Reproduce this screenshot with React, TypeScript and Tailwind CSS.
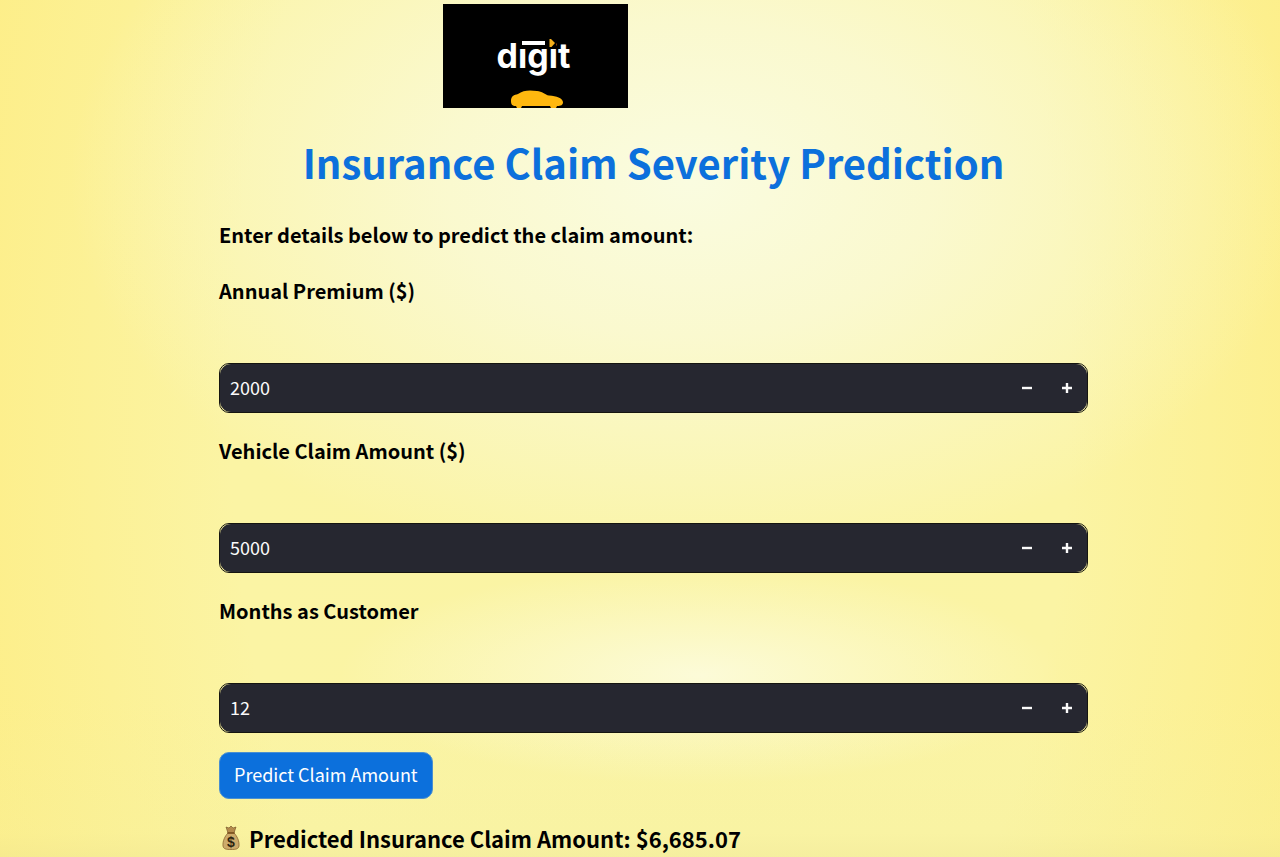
import { useId, useState } from "react";

function Logo() {
  return (
    <svg
      role="img"
      aria-label="digit"
      viewBox="0 0 185 104"
      className="ml-56 block h-[104px] w-[185px] bg-black"
    >
      <text
        x="90.5"
        y="64"
        textAnchor="middle"
        fill="#fff"
        fontSize="34"
        fontWeight="700"
        fontFamily="Inter, sans-serif"
      >
        digit
      </text>
      <rect x="74" y="33" width="11" height="12" fill="#000" />
      <rect x="102" y="33" width="11" height="12" fill="#000" />
      <rect x="79" y="37" width="23" height="4" fill="#fff" />
      <path d="M106.500 35 H108 L112 39 L108.500 43 H106.500 Z" fill="#f5b01d" />
      <path
        d="M68 97 C68 92 71 91 75 90 C80 86 87 86 94 87 C99 87 102 91 106 91.500 C114 92 119 94 120 98 C120 101 118 102 114 102 L113 104 L108 104 L107 102 L79 102 L78 104 L74 104 L73 102 C69 102 68 100 68 97 Z"
        fill="#ffb80f"
      />
    </svg>
  );
}

function MoneyBag() {
  return (
    <svg role="img" aria-label="Money bag" viewBox="0 0 24 26" className="h-[26px] w-6 shrink-0">
      <path d="M7 2 L10 3 L12 1 L14 3 L17 2 L15 8 H9 Z" fill="#b58b4c" stroke="#6d4c21" strokeWidth="0.6" />
      <path
        d="M9 8 H15 C18 11 20.500 16 20 21 C19.500 24 17 24.500 12 24.500 C7 24.500 4.500 24 4 21 C3.500 16 6 11 9 8 Z"
        fill="#cdab6b"
        stroke="#8a6530"
        strokeWidth="0.8"
      />
      <path d="M9 8 H15" stroke="#7a4f1c" strokeWidth="1.6" strokeLinecap="round" />
      <text
        x="12"
        y="21.500"
        textAnchor="middle"
        fontSize="14"
        fontWeight="700"
        fontFamily="Liberation Sans, sans-serif"
        fill="#2d2410"
      >
        $
      </text>
    </svg>
  );
}

type FieldProps = {
  label: string;
  value: number;
  onChange: (value: number) => void;
};

function NumberField({ label, value, onChange }: FieldProps) {
  const id = useId();
  return (
    <div className="flex flex-col gap-14">
      <label htmlFor={id} className="text-[20px] leading-8 font-bold text-black">
        {label}
      </label>
      <div className="h-[50px] rounded-[10px] border border-[#15150f]">
        <div className="flex h-full items-stretch rounded-[11px] bg-[#262730] text-[#fafafa]">
          <input
            id={id}
            type="text"
            inputMode="numeric"
            value={value}
            onChange={(e) => onChange(Number(e.target.value) || 0)}
            className="min-w-0 flex-1 bg-transparent px-[10px] pb-[2px] text-[18px] outline-none"
          />
          <button
            type="button"
            aria-label={`Decrease ${label}`}
            onClick={() => onChange(Math.max(0, value - 1))}
            className="flex w-10 items-center justify-center"
          >
            <svg viewBox="0 0 12 12" className="size-3">
              <path d="M1 6 H11" stroke="currentColor" strokeWidth="2.4" />
            </svg>
          </button>
          <button
            type="button"
            aria-label={`Increase ${label}`}
            onClick={() => onChange(value + 1)}
            className="flex w-10 items-center justify-center"
          >
            <svg viewBox="0 0 12 12" className="size-3">
              <path d="M1 6 H11 M6 1 V11" stroke="currentColor" strokeWidth="2.4" />
            </svg>
          </button>
        </div>
      </div>
    </div>
  );
}

export default function App() {
  const [premium, setPremium] = useState(2000);
  const [claim, setClaim] = useState(5000);
  const [months, setMonths] = useState(12);

  return (
    <div className="min-h-screen bg-[#fdee88] bg-[linear-gradient(to_top,#ece59660_0px,#f3f0a040_24px,#f3f0a000_160px),radial-gradient(ellipse_360px_110px_at_700px_675px,#fcfbd8_0%,#fcfbd800_100%),radial-gradient(ellipse_620px_400px_at_690px_180px,#fafce0_0%,#fafad8d0_40%,#faf7b800_100%),radial-gradient(ellipse_700px_1300px_at_650px_400px,#faf4a4_0%,#fbf4a4_60%,#fdee8800_100%)] pl-[27px] font-['Noto_Sans_CJK_SC',sans-serif]">
      <main className="mx-auto flex max-w-[869px] flex-col pt-1">
        <Logo />
        <h1 className="mt-[26px] text-center text-[40px] leading-[56px] font-bold text-[#0c70dc]">
          Insurance Claim Severity Prediction
        </h1>
        <p className="mt-[29px] text-[20px] leading-8 font-bold text-black">
          Enter details below to predict the claim amount:
        </p>
        <form className="mt-6 flex flex-col" onSubmit={(e) => e.preventDefault()}>
          <div className="flex flex-col gap-[22px]">
            <NumberField label="Annual Premium ($)" value={premium} onChange={setPremium} />
            <NumberField label="Vehicle Claim Amount ($)" value={claim} onChange={setClaim} />
            <NumberField label="Months as Customer" value={months} onChange={setMonths} />
          </div>
          <button
            type="submit"
            className="mt-[19px] flex h-[47px] items-center self-start rounded-[10px] border border-[#4a8fd0] bg-[#0c70dc] px-[14px] pb-[2px] text-[18px] text-white"
          >
            Predict Claim Amount
          </button>
        </form>
        <p className="mt-[23px] flex items-center gap-[6px] text-[22px] leading-8 font-bold text-black">
          <MoneyBag />
          <span>Predicted Insurance Claim Amount: $6,685.07</span>
        </p>
      </main>
    </div>
  );
}
